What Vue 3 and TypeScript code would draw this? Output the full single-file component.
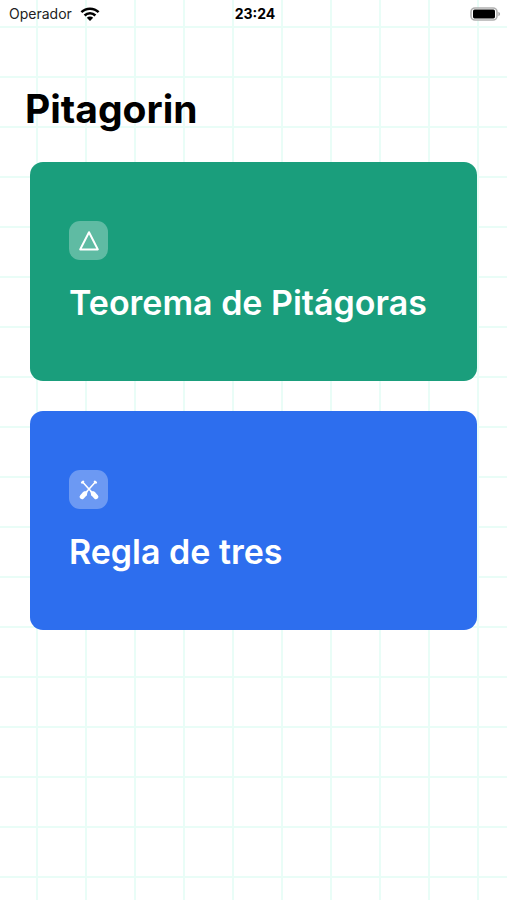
<script setup lang="ts">
interface Topic {
  id: 'pythagoras' | 'rule-of-three'
  title: string
  tone: 'green' | 'blue'
}

const topics: Topic[] = [
  { id: 'pythagoras', title: 'Teorema de Pitágoras', tone: 'green' },
  { id: 'rule-of-three', title: 'Regla de tres', tone: 'blue' },
]
</script>

<template>
  <div class="screen">
    <header class="status">
      <div class="carrier">
        <span>Operador</span>
        <svg class="wifi" viewBox="0 0 20 14" aria-hidden="true">
          <g fill="none" stroke="#000" stroke-width="2.5">
            <path d="M1.4 5.2a12.2 12.2 0 0 1 17.2 0" />
            <path d="M4.6 8.5a7.6 7.6 0 0 1 10.8 0" />
          </g>
          <path d="M10 14 6.8 10.8a4.5 4.5 0 0 1 6.4 0z" />
        </svg>
      </div>
      <time class="clock">23:24</time>
      <svg class="battery" viewBox="0 0 31 14" aria-hidden="true">
        <rect x="1" y="1" width="26" height="12" rx="4" fill="#fff" stroke="#b0b0b0" stroke-width="1.6" />
        <rect x="3" y="2.6" width="22" height="8.8" rx="1.6" />
        <path d="M28.4 4.8c2.2.9 2.2 3.5 0 4.4z" fill="#a6a6a6" />
      </svg>
    </header>

    <main class="content">
      <h1 class="heading">Pitagorin</h1>
      <nav class="topics">
        <button v-for="topic in topics" :key="topic.id" type="button" class="card" :class="topic.tone">
          <span class="badge">
            <svg v-if="topic.id === 'pythagoras'" class="glyph" viewBox="0 0 24 24" aria-hidden="true">
              <path d="M12 3.2 20.8 20.4H3.2z" fill="none" stroke="#fff" stroke-width="2" stroke-linejoin="round" />
            </svg>
            <svg v-else class="glyph" viewBox="0 0 24 24" aria-hidden="true">
              <g fill="none" stroke="#fff" stroke-linecap="round">
                <path d="M5.6 4 16 15.5M18.4 4 8 15.5" stroke-width="1.6" />
                <path d="M5 4.6 6.2 3.6M19 4.6 17.8 3.6" stroke-width="2.2" />
                <path d="M16.3 15.8 19 18.8M7.7 15.8 5 18.8" stroke-width="4.8" />
              </g>
              <path d="M13 12.400 18.4 14.600 14.600 18z M11 12.400 5.600 14.600 9.400 18z" fill="#fff" />
            </svg>
          </span>
          <span class="title">{{ topic.title }}</span>
        </button>
      </nav>
    </main>
  </div>
</template>

<style>
body {
  margin: 0;
}
</style>

<style scoped>
.screen {
  box-sizing: border-box;
  min-height: 100vh;
  padding-bottom: 32px;
  font-family: Inter, 'Liberation Sans', sans-serif;
  color: #000;
  background-color: #fff;
  background-image:
    linear-gradient(to right, #e9fdf7 2px, transparent 2px),
    linear-gradient(to bottom, #e9fdf7 2px, transparent 2px);
  background-size: 49px 100%, 100% 50px;
  background-position: 36px 0, 0 26px;
}

.status {
  display: grid;
  grid-template-columns: 1fr auto 1fr;
  align-items: center;
  height: 27px;
  padding: 0 6px 0 9px;
  font-size: 14px;
  line-height: 18px;
}

.carrier {
  display: flex;
  align-items: center;
  gap: 8px;
  color: #222;
}

.wifi {
  width: 20px;
  height: 14px;
}

.clock {
  font-weight: 700;
}

.battery {
  justify-self: end;
  width: 31px;
  height: 14px;
}

.content {
  padding: 57px 30px 0;
}

.heading {
  margin: 0 0 28px -5px;
  font-size: 39px;
  font-weight: 700;
  line-height: 50px;
}

.topics {
  display: flex;
  flex-direction: column;
  gap: 30px;
}

.card {
  display: flex;
  flex-direction: column;
  align-items: flex-start;
  gap: 20px;
  padding: 59px 39px 55px;
  border: 0;
  border-radius: 13px;
  font: inherit;
  color: #fff;
  text-align: left;
  cursor: pointer;
}

.green {
  background: #1a9e7c;
}

.blue {
  background: #2d6eee;
}

.badge {
  display: grid;
  place-items: center;
  width: 39px;
  height: 39px;
  border-radius: 11px;
  background: rgba(255, 255, 255, 0.3);
}

.glyph {
  width: 24px;
  height: 24px;
}

.title {
  font-size: 34px;
  font-weight: 600;
  line-height: 46px;
}
</style>
